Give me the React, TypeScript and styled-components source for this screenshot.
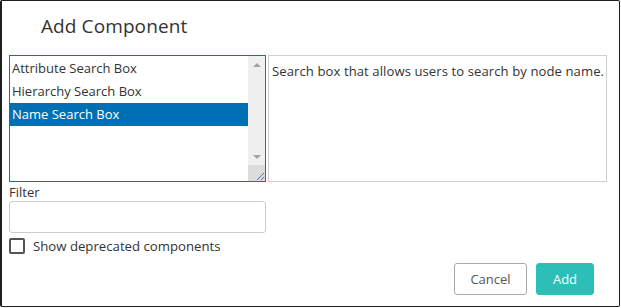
import styled, { createGlobalStyle } from "styled-components";

const GlobalStyle = createGlobalStyle`
html, body {
  margin: 0;
  padding: 0;
  background: #ffffff;
}
body {
  font-family: "Open Sans", "Noto Sans", Arial, sans-serif;
  color: #333333;
}
* {
  box-sizing: border-box;
}
`;

const Dialog = styled.div`
  width: 620px;
  height: 307px;
  border: 1px solid #1e1e1e;
  border-left-width: 2px;
  border-radius: 2px;
  background: #ffffff;
  display: flex;
  flex-direction: column;
  padding: 0 0 0 7px;
`;

const Title = styled.h2`
  margin: 0;
  padding: 12px 0 0 32px;
  height: 54px;
  font-size: 19px;
  font-weight: 400;
  color: #333333;
  letter-spacing: 0.1px;
`;

const TopRow = styled.div`
  display: flex;
  gap: 2px;
  height: 127px;
`;

const ListBox = styled.div`
  width: 257px;
  border: 1px solid #1e6ea6;
  display: flex;
  background: #ffffff;
`;

const Items = styled.ul`
  flex: 1;
  list-style: none;
  margin: 0;
  padding: 1px 0 0 0;
`;

const Item = styled.li<{ $selected?: boolean }>`
  height: 23px;
  line-height: 23px;
  padding-left: 2px;
  font-size: 13px;
  white-space: nowrap;
  color: ${(p) => (p.$selected ? "#ffffff" : "#333333")};
  background: ${(p) => (p.$selected ? "#0070b4" : "transparent")};
`;

const ScrollBar = styled.div`
  width: 17px;
  background: #f0f0f0;
  display: flex;
  flex-direction: column;
  align-items: center;
`;

const Arrow = styled.div<{ $down?: boolean }>`
  height: 17px;
  width: 17px;
  display: flex;
  align-items: center;
  justify-content: center;
  &::after {
    content: "";
    border-left: 4px solid transparent;
    border-right: 4px solid transparent;
    ${(p) =>
      p.$down
        ? "border-top: 4px solid #a3a3a3;"
        : "border-bottom: 4px solid #a3a3a3;"}
  }
`;

const Track = styled.div`
  flex: 1;
`;

const Grip = styled.div`
  width: 17px;
  height: 16px;
  background: #dcdcdc;
  display: flex;
  align-items: flex-end;
  justify-content: flex-end;
`;

const Description = styled.div`
  width: 339px;
  border: 1px solid #cfcfcf;
  padding: 6px 3px;
  font-size: 13.1px;
  letter-spacing: 0.08px;
  white-space: nowrap;
  color: #333333;
`;

const Label = styled.label`
  display: block;
  margin-top: 2px;
  height: 17px;
  font-size: 13px;
  line-height: 17px;
  color: #333333;
`;

const TextInput = styled.input`
  display: block;
  width: 257px;
  height: 32px;
  border: 1px solid #cccccc;
  border-radius: 3px;
  outline: none;
  padding: 0 6px;
  font-family: inherit;
  font-size: 13px;
`;

const CheckRow = styled.label`
  display: flex;
  align-items: center;
  gap: 8px;
  margin-top: 4px;
  height: 17px;
  font-size: 13.2px;
  color: #333333;
`;

const Box = styled.span`
  width: 16px;
  height: 16px;
  border: 2px solid #555555;
  border-radius: 2px;
  background: #ffffff;
`;

const Footer = styled.div`
  display: flex;
  justify-content: flex-end;
  gap: 9px;
  padding: 9px 25px 0 0;
`;

const Button = styled.button<{ $primary?: boolean }>`
  height: 32px;
  width: ${(p) => (p.$primary ? "58px" : "73px")};
  padding: 0;
  border-radius: 3px;
  font-family: inherit;
  font-size: 13px;
  border: 1px solid ${(p) => (p.$primary ? "#2bbfb8" : "#a9a9a9")};
  background: ${(p) => (p.$primary ? "#2bbfb8" : "#ffffff")};
  color: ${(p) => (p.$primary ? "#ffffff" : "#555555")};
`;

const items = ["Attribute Search Box", "Hierarchy Search Box", "Name Search Box"];

const App: React.FC = () => {
  return (
    <>
      <GlobalStyle />
      <Dialog>
        <Title>Add Component</Title>
        <TopRow>
          <ListBox>
            <Items>
              {items.map((name) => (
                <Item key={name} $selected={name === "Name Search Box"}>
                  {name}
                </Item>
              ))}
            </Items>
            <ScrollBar>
              <Arrow />
              <Track />
              <Arrow $down />
              <Grip>
                <svg width="12" height="12" viewBox="0 0 12 12">
                  <path d="M11 4 L4 11 M11 8 L8 11" stroke="#6a6a6a" strokeWidth="1" />
                </svg>
              </Grip>
            </ScrollBar>
          </ListBox>
          <Description>Search box that allows users to search by node name.</Description>
        </TopRow>
        <Label>Filter</Label>
        <TextInput type="text" />
        <CheckRow>
          <Box />
          Show deprecated components
        </CheckRow>
        <Footer>
          <Button>Cancel</Button>
          <Button $primary>Add</Button>
        </Footer>
      </Dialog>
    </>
  );
};

export default App;
